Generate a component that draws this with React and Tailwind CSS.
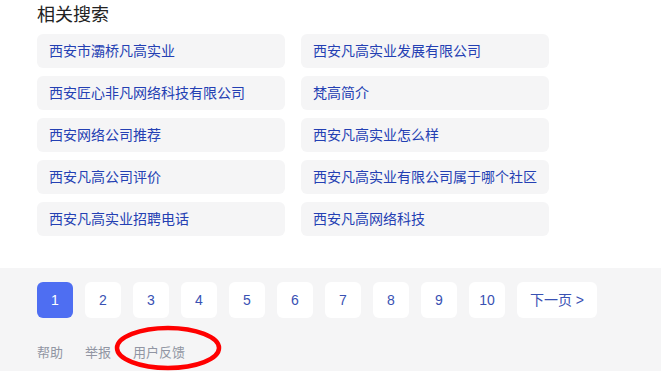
const related = [
  '西安市灞桥凡高实业',
  '西安凡高实业发展有限公司',
  '西安匠心非凡网络科技有限公司',
  '梵高简介',
  '西安网络公司推荐',
  '西安凡高实业怎么样',
  '西安凡高公司评价',
  '西安凡高实业有限公司属于哪个社区',
  '西安凡高实业招聘电话',
  '西安凡高网络科技',
]

const pages = [1, 2, 3, 4, 5, 6, 7, 8, 9, 10]

export default function App() {
  return (
    <div
      className="w-[661px] h-[371px] overflow-hidden bg-white flex flex-col"
      style={{ fontFamily: '"Liberation Sans", "Noto Sans CJK SC", sans-serif' }}
    >
      {/* Related searches */}
      <div className="pl-[37px] pt-[3px] h-[268px]">
        <h2 className="text-[18px] leading-[24px] text-[#222] mb-[7px]">相关搜索</h2>
        <div className="grid grid-cols-[248px_248px] gap-x-[16px] gap-y-[8px]">
          {related.map(t => (
            <a
              key={t}
              className="h-[34px] rounded-[6px] bg-[#f5f5f6] px-[12px] flex items-center text-[14px] text-[#2440b3] cursor-pointer"
            >
              {t}
            </a>
          ))}
        </div>
      </div>

      {/* Pager + footer */}
      <div className="flex-1 bg-[#f5f5f6] pl-[37px] pt-[14px] relative">
        <div className="flex gap-[12px]">
          {pages.map(p => (
            <span
              key={p}
              className={`w-[36px] h-[36px] rounded-[6px] flex items-center justify-center text-[14px] ${p === 1 ? 'bg-[#4e6ef2] text-white' : 'bg-white text-[#3951b3]'}`}
            >
              {p}
            </span>
          ))}
          <span className="w-[80px] h-[36px] rounded-[6px] bg-white text-[#3951b3] text-[14px] flex items-center justify-center">
            下一页 &gt;
          </span>
        </div>
        <div className="flex gap-[22px] mt-[26px] text-[13px] leading-[18px] text-[#9195a3]">
          <span>帮助</span>
          <span>举报</span>
          <span>用户反馈</span>
        </div>

        {/* red annotation ellipse */}
        <svg className="absolute left-[112px] top-[56px] pointer-events-none" width="112" height="48" viewBox="0 0 112 48">
          <ellipse cx="56" cy="24" rx="51" ry="20" fill="none" stroke="#ff0000" strokeWidth="4.5" />
        </svg>
      </div>
    </div>
  )
}
